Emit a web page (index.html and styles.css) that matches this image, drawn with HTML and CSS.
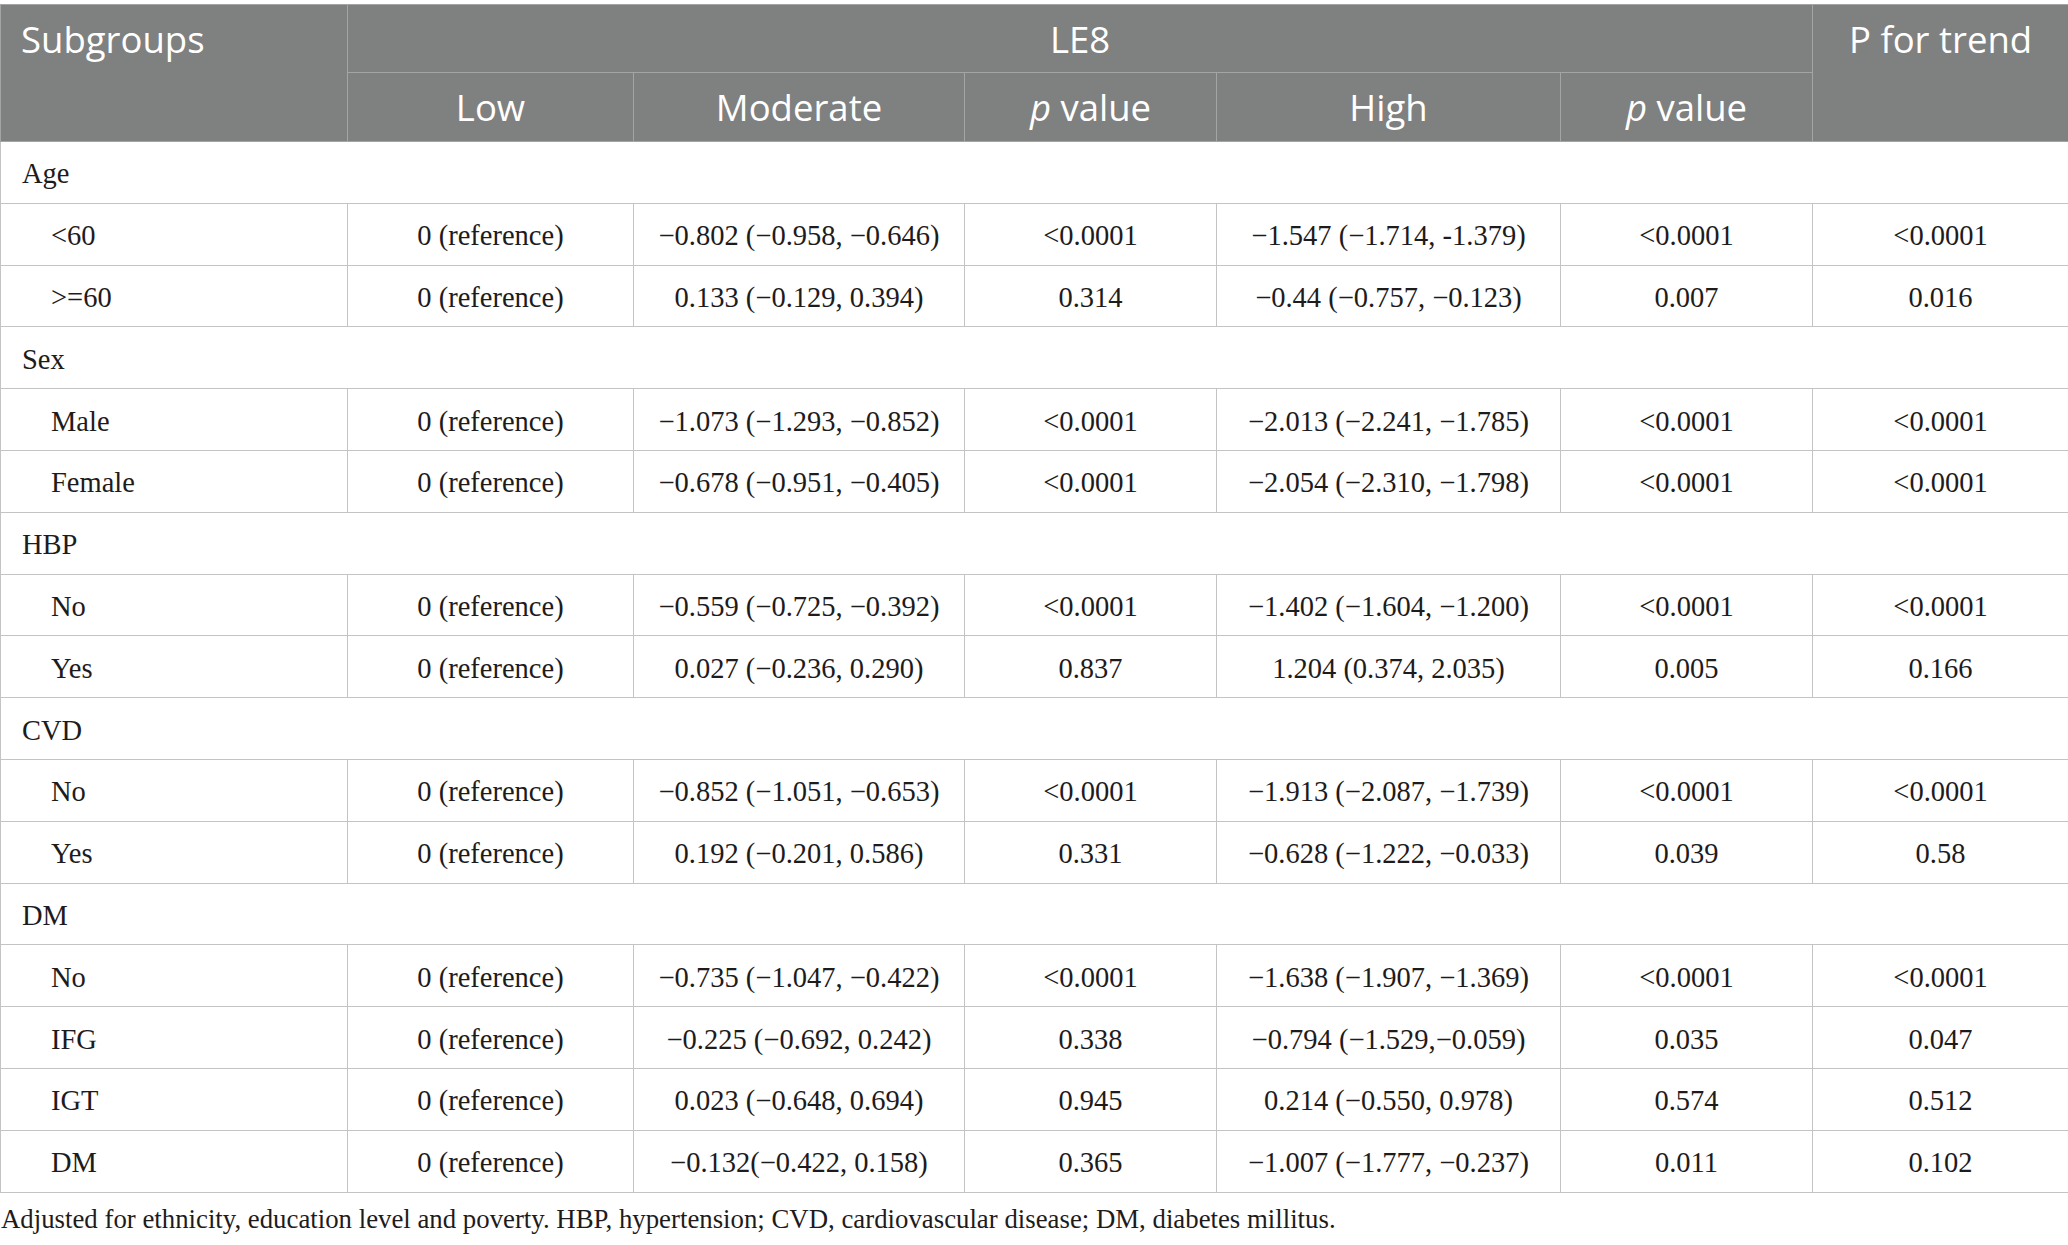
FILE: index.html
```html
<!DOCTYPE html>
<html lang="en">
<head>
    <meta charset="UTF-8">
    <meta name="viewport" content="width=device-width, initial-scale=1.0">
    <title>LE8 subgroup analysis</title>
    <link rel="stylesheet" href="styles.css">
</head>
<body>
    <table class="results">
        <colgroup>
            <col class="c-group">
            <col class="c-low">
            <col class="c-mod">
            <col class="c-p1">
            <col class="c-high">
            <col class="c-p2">
            <col class="c-trend">
        </colgroup>
        <thead>
            <tr class="head-top">
                <th rowspan="2" class="th-left">Subgroups</th>
                <th colspan="5">LE8</th>
                <th rowspan="2" class="th-trend">P for trend</th>
            </tr>
            <tr class="head-sub">
                <th>Low</th>
                <th>Moderate</th>
                <th><i>p</i> value</th>
                <th>High</th>
                <th><i>p</i> value</th>
            </tr>
        </thead>
        <tbody>
            <tr class="group"><td colspan="7">Age</td></tr>
            <tr><td class="sub">&lt;60</td><td>0 (reference)</td><td>&minus;0.802 (&minus;0.958, &minus;0.646)</td><td>&lt;0.0001</td><td>&minus;1.547 (&minus;1.714, -1.379)</td><td>&lt;0.0001</td><td>&lt;0.0001</td></tr>
            <tr><td class="sub">&gt;=60</td><td>0 (reference)</td><td>0.133 (&minus;0.129, 0.394)</td><td>0.314</td><td>&minus;0.44 (&minus;0.757, &minus;0.123)</td><td>0.007</td><td>0.016</td></tr>

            <tr class="group"><td colspan="7">Sex</td></tr>
            <tr><td class="sub">Male</td><td>0 (reference)</td><td>&minus;1.073 (&minus;1.293, &minus;0.852)</td><td>&lt;0.0001</td><td>&minus;2.013 (&minus;2.241, &minus;1.785)</td><td>&lt;0.0001</td><td>&lt;0.0001</td></tr>
            <tr><td class="sub">Female</td><td>0 (reference)</td><td>&minus;0.678 (&minus;0.951, &minus;0.405)</td><td>&lt;0.0001</td><td>&minus;2.054 (&minus;2.310, &minus;1.798)</td><td>&lt;0.0001</td><td>&lt;0.0001</td></tr>

            <tr class="group"><td colspan="7">HBP</td></tr>
            <tr><td class="sub">No</td><td>0 (reference)</td><td>&minus;0.559 (&minus;0.725, &minus;0.392)</td><td>&lt;0.0001</td><td>&minus;1.402 (&minus;1.604, &minus;1.200)</td><td>&lt;0.0001</td><td>&lt;0.0001</td></tr>
            <tr><td class="sub">Yes</td><td>0 (reference)</td><td>0.027 (&minus;0.236, 0.290)</td><td>0.837</td><td>1.204 (0.374, 2.035)</td><td>0.005</td><td>0.166</td></tr>

            <tr class="group"><td colspan="7">CVD</td></tr>
            <tr><td class="sub">No</td><td>0 (reference)</td><td>&minus;0.852 (&minus;1.051, &minus;0.653)</td><td>&lt;0.0001</td><td>&minus;1.913 (&minus;2.087, &minus;1.739)</td><td>&lt;0.0001</td><td>&lt;0.0001</td></tr>
            <tr><td class="sub">Yes</td><td>0 (reference)</td><td>0.192 (&minus;0.201, 0.586)</td><td>0.331</td><td>&minus;0.628 (&minus;1.222, &minus;0.033)</td><td>0.039</td><td>0.58</td></tr>

            <tr class="group"><td colspan="7">DM</td></tr>
            <tr><td class="sub">No</td><td>0 (reference)</td><td>&minus;0.735 (&minus;1.047, &minus;0.422)</td><td>&lt;0.0001</td><td>&minus;1.638 (&minus;1.907, &minus;1.369)</td><td>&lt;0.0001</td><td>&lt;0.0001</td></tr>
            <tr><td class="sub">IFG</td><td>0 (reference)</td><td>&minus;0.225 (&minus;0.692, 0.242)</td><td>0.338</td><td>&minus;0.794 (&minus;1.529,&minus;0.059)</td><td>0.035</td><td>0.047</td></tr>
            <tr><td class="sub">IGT</td><td>0 (reference)</td><td>0.023 (&minus;0.648, 0.694)</td><td>0.945</td><td>0.214 (&minus;0.550, 0.978)</td><td>0.574</td><td>0.512</td></tr>
            <tr><td class="sub">DM</td><td>0 (reference)</td><td>&minus;0.132(&minus;0.422, 0.158)</td><td>0.365</td><td>&minus;1.007 (&minus;1.777, &minus;0.237)</td><td>0.011</td><td>0.102</td></tr>
        </tbody>
    </table>

    <p class="footnote">Adjusted for ethnicity, education level and poverty. HBP, hypertension; CVD, cardiovascular disease; DM, diabetes millitus.</p>
</body>
</html>
```

FILE: styles.css
```css
body {
    margin: 0;
    padding: 4px 0 0;
    background: #fff;
    color: #1e1b1c;
    font-family: "Liberation Serif", "Times New Roman", serif;
}
.results {
    width: 2068px;
    table-layout: fixed;
    border-collapse: collapse;
}
.c-group { width: 347px; }
.c-low { width: 286px; }
.c-mod { width: 331px; }
.c-p1 { width: 252px; }
.c-high { width: 344px; }
.c-p2 { width: 252px; }
.c-trend { width: 256px; }

.results th {
    background-color: #7f8080;
    color: #fff;
    font-family: "Open Sans", "Liberation Sans", sans-serif;
    font-size: 36.5px;
    font-weight: 400;
    border: 1px solid #a3a4a4;
    padding: 0 10px;
    white-space: nowrap;
}
.head-top th {
    height: 67px;
}
.head-sub th {
    height: 68px;
}
.results th.th-left {
    text-align: left;
    vertical-align: top;
    padding: 9px 20px 0;
}
.results th.th-trend {
    vertical-align: top;
    padding-top: 9px;
}
.results td {
    height: 56.8px;
    border: 1px solid #c4c4c4;
    font-size: 28.5px;
    text-align: center;
    padding: 4px 8px 0;
    white-space: nowrap;
}
.results td.sub {
    text-align: left;
    padding-left: 50px;
}
.group td {
    text-align: left;
    padding-left: 21px;
}
.footnote {
    margin: 11px 0 0 1px;
    font-size: 26.8px;
}
```
